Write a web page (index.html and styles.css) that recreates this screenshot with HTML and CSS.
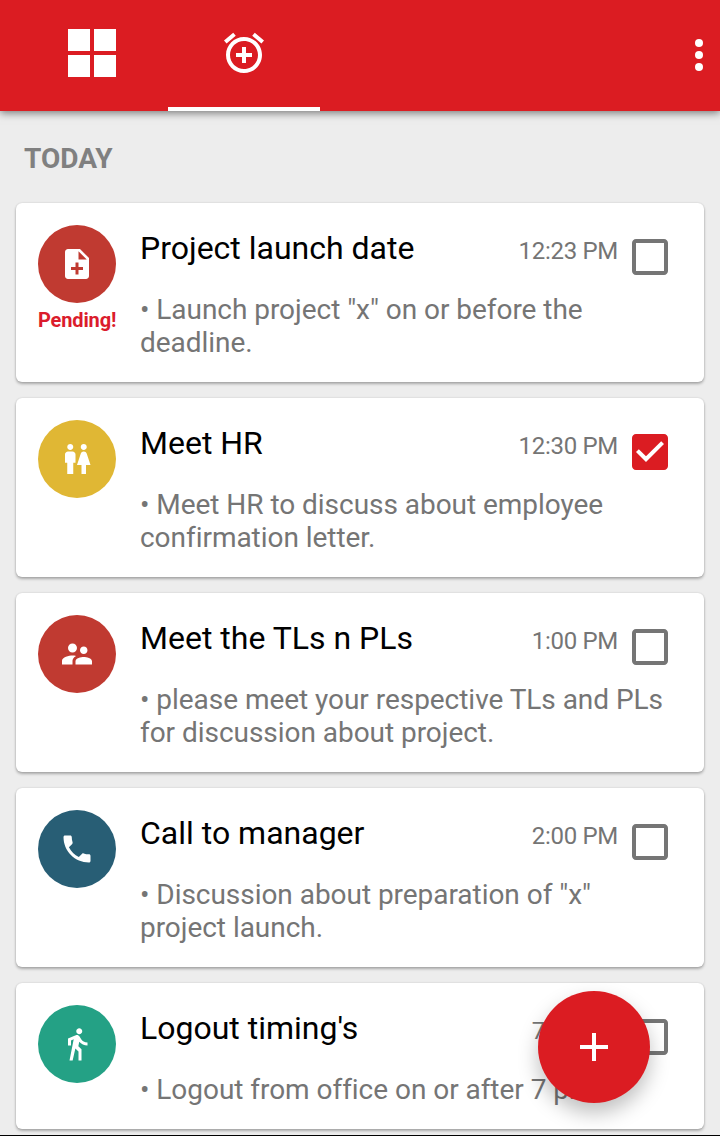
FILE: index.html
```
<!DOCTYPE html>
<html lang="en">
<head>
    <meta charset="UTF-8">
    <meta name="viewport" content="width=device-width, initial-scale=1.0">
    <title>Reminders</title>
    <link rel="stylesheet" href="styles.css">
</head>
<body>
    <header class="app-bar">
        <nav class="tabs">
            <a class="tab" aria-label="Dashboard">
                <svg viewBox="0 0 48 48"><path d="M0 0h22v22H0zM26 0h22v22H26zM0 26h22v22H0zM26 26h22v22H26z"/></svg>
            </a>
            <a class="tab active" aria-label="Reminders">
                <svg viewBox="0 0 24 24"><path d="M7.88 3.39L6.6 1.86 2 5.71l1.29 1.53 4.59-3.85zM22 5.72l-4.6-3.86-1.29 1.53 4.6 3.86L22 5.72zM12 4c-4.97 0-9 4.03-9 9s4.02 9 9 9c4.97 0 9-4.03 9-9s-4.03-9-9-9zm0 16c-3.87 0-7-3.13-7-7s3.13-7 7-7 7 3.13 7 7-3.13 7-7 7zm1-11h-2v3H8v2h3v3h2v-3h3v-2h-3V9z"/></svg>
            </a>
        </nav>
        <button class="more" aria-label="More options">
            <svg viewBox="0 0 8 32"><circle cx="4" cy="4" r="4"/><circle cx="4" cy="16" r="4"/><circle cx="4" cy="28" r="4"/></svg>
        </button>
    </header>

    <main>
        <h2 class="section-title">TODAY</h2>

        <div class="list">
            <div class="card">
                <div class="side">
                    <div class="avatar red">
                        <svg viewBox="0 0 24 24"><path d="M14 2H6c-1.1 0-1.99.9-1.99 2L4 20c0 1.1.89 2 1.99 2H18c1.1 0 2-.9 2-2V8l-6-6zm2 14h-3v3h-2v-3H8v-2h3v-3h2v3h3v2zm-3-7V3.5L18.5 9H13z"/></svg>
                    </div>
                    <span class="status">Pending!</span>
                </div>
                <div class="content">
                    <div class="row">
                        <h3 class="title">Project launch date</h3>
                        <span class="time">12:23 PM</span>
                        <svg class="checkbox" viewBox="3 3 18 18"><path d="M19 5v14H5V5h14m0-2H5c-1.1 0-2 .9-2 2v14c0 1.1.9 2 2 2h14c1.1 0 2-.9 2-2V5c0-1.1-.9-2-2-2z"/></svg>
                    </div>
                    <p class="text">• Launch project "x" on or before the<br>deadline.</p>
                </div>
            </div>

            <div class="card">
                <div class="side">
                    <div class="avatar yellow">
                        <svg viewBox="0 0 24 24"><path d="M5.5 22v-7.5H4V9c0-1.1.9-2 2-2h3c1.1 0 2 .9 2 2v5.5H9.5V22h-4zM18 22v-6h3l-2.54-7.63C18.18 7.55 17.42 7 16.56 7h-.12c-.86 0-1.63.55-1.9 1.37L12 16h3v6h3zM7.5 6c1.11 0 2-.89 2-2s-.89-2-2-2-2 .89-2 2 .89 2 2 2zm9 0c1.11 0 2-.89 2-2s-.89-2-2-2-2 .89-2 2 .89 2 2 2z"/></svg>
                    </div>
                </div>
                <div class="content">
                    <div class="row">
                        <h3 class="title">Meet HR</h3>
                        <span class="time">12:30 PM</span>
                        <svg class="checkbox checked" viewBox="3 3 18 18"><path d="M19 3H5c-1.11 0-2 .9-2 2v14c0 1.1.89 2 2 2h14c1.11 0 2-.9 2-2V5c0-1.1-.89-2-2-2zm-9 14l-5-5 1.41-1.41L10 14.17l7.59-7.59L19 8l-9 9z"/></svg>
                    </div>
                    <p class="text">• Meet HR to discuss about employee<br>confirmation letter.</p>
                </div>
            </div>

            <div class="card">
                <div class="side">
                    <div class="avatar red">
                        <svg viewBox="0 0 24 24"><path d="M16.5 12c1.38 0 2.49-1.12 2.49-2.5S17.88 7 16.5 7C15.12 7 14 8.12 14 9.5s1.12 2.5 2.5 2.5zM9 11c1.66 0 2.99-1.34 2.99-3S10.66 5 9 5C7.34 5 6 6.34 6 8s1.34 3 3 3zm7.5 3c-1.83 0-5.5.92-5.5 2.75V19h11v-2.25c0-1.83-3.67-2.75-5.5-2.75zM9 13c-2.33 0-7 1.17-7 3.5V19h7v-2.25c0-.85.33-2.34 2.37-3.47C10.5 13.1 9.66 13 9 13z"/></svg>
                    </div>
                </div>
                <div class="content">
                    <div class="row">
                        <h3 class="title">Meet the TLs n PLs</h3>
                        <span class="time">1:00 PM</span>
                        <svg class="checkbox" viewBox="3 3 18 18"><path d="M19 5v14H5V5h14m0-2H5c-1.1 0-2 .9-2 2v14c0 1.1.9 2 2 2h14c1.1 0 2-.9 2-2V5c0-1.1-.9-2-2-2z"/></svg>
                    </div>
                    <p class="text">• please meet your respective TLs and PLs<br>for discussion about project.</p>
                </div>
            </div>

            <div class="card">
                <div class="side">
                    <div class="avatar blue">
                        <svg viewBox="0 0 24 24"><path d="M6.62 10.79c1.44 2.83 3.76 5.14 6.59 6.59l2.2-2.2c.27-.27.67-.36 1.02-.24 1.12.37 2.33.57 3.57.57.55 0 1 .45 1 1V20c0 .55-.45 1-1 1-9.39 0-17-7.61-17-17 0-.55.45-1 1-1h3.5c.55 0 1 .45 1 1 0 1.25.2 2.45.57 3.57.11.35.03.74-.25 1.02l-2.2 2.2z"/></svg>
                    </div>
                </div>
                <div class="content">
                    <div class="row">
                        <h3 class="title">Call to manager</h3>
                        <span class="time">2:00 PM</span>
                        <svg class="checkbox" viewBox="3 3 18 18"><path d="M19 5v14H5V5h14m0-2H5c-1.1 0-2 .9-2 2v14c0 1.1.9 2 2 2h14c1.1 0 2-.9 2-2V5c0-1.1-.9-2-2-2z"/></svg>
                    </div>
                    <p class="text">• Discussion about preparation of "x"<br>project launch.</p>
                </div>
            </div>

            <div class="card">
                <div class="side">
                    <div class="avatar green">
                        <svg viewBox="0 0 24 24"><path d="M13.5 5.5c1.1 0 2-.9 2-2s-.9-2-2-2-2 .9-2 2 .9 2 2 2zM9.8 8.9L7 23h2.1l1.8-8 2.1 2v6h2v-7.5l-2.1-2 .6-3C14.8 12 16.8 13 19 13v-2c-1.9 0-3.5-1-4.3-2.4l-1-1.6c-.4-.6-1-1-1.7-1-.3 0-.5.1-.8.1L6 8.3V13h2V9.6l1.8-.7"/></svg>
                    </div>
                </div>
                <div class="content">
                    <div class="row">
                        <h3 class="title">Logout timing's</h3>
                        <span class="time">7:00 PM</span>
                        <svg class="checkbox" viewBox="3 3 18 18"><path d="M19 5v14H5V5h14m0-2H5c-1.1 0-2 .9-2 2v14c0 1.1.9 2 2 2h14c1.1 0 2-.9 2-2V5c0-1.1-.9-2-2-2z"/></svg>
                    </div>
                    <p class="text">• Logout from office on or after 7 pm</p>
                </div>
            </div>
        </div>
    </main>

    <button class="fab" aria-label="Add reminder">
        <svg viewBox="0 0 28 28"><path d="M12 0h4v12h12v4H16v12h-4V16H0v-4h12z"/></svg>
    </button>
</body>
</html>
```
FILE: styles.css
```
* {
    box-sizing: border-box;
    margin: 0;
    padding: 0;
}

body {
    height: 1136px;
    overflow: hidden;
    background-color: #ededed;
    border-bottom: 1px solid #000;
    font-family: Roboto, sans-serif;
    color: #757575;
}

svg {
    display: block;
    fill: #fff;
}

button {
    border: none;
    background: none;
    cursor: pointer;
}

/* Top bar */
.app-bar {
    display: flex;
    justify-content: space-between;
    height: 111px;
    padding: 0 17px 0 16px;
    background-color: #db1c22;
    box-shadow: 0 2px 8px rgba(0, 0, 0, 0.5);
}

.tabs {
    display: flex;
}

.tab {
    width: 152px;
    padding: 29px 52px 0;
    border-bottom: 4px solid transparent;
}

.tab.active {
    border-bottom-color: #fff;
}

.tab svg {
    width: 48px;
    height: 48px;
}

.more {
    padding-bottom: 1px;
}

.more svg {
    width: 8px;
    height: 32px;
}

.section-title {
    padding: 31px 24px 28px;
    font-size: 28px;
    line-height: 33px;
    font-weight: bold;
    color: #808080;
}

/* Reminder cards */
.list {
    display: flex;
    flex-direction: column;
    gap: 16px;
    padding: 0 16px;
}

.card {
    display: flex;
    gap: 24px;
    padding: 22px 22px 23px;
    border-radius: 6px;
    background-color: #fff;
    box-shadow: 0 2px 3px rgba(0, 0, 0, 0.28), 0 0 2px rgba(0, 0, 0, 0.15);
}

.side {
    width: 78px;
    text-align: center;
}

.avatar {
    display: flex;
    justify-content: center;
    align-items: center;
    height: 78px;
    border-radius: 50%;
}

.avatar svg {
    width: 36px;
    height: 36px;
}

.red {
    background-color: #c03a31;
}

.yellow {
    background-color: #e0b734;
}

.blue {
    background-color: #285e75;
}

.green {
    background-color: #24a185;
}

.status {
    display: block;
    margin-top: 5px;
    font-size: 20px;
    line-height: 24px;
    font-weight: bold;
    letter-spacing: -0.15px;
    color: #db1c2c;
    white-space: nowrap;
}

.content {
    flex: 1;
    padding-top: 4px;
}

.row {
    display: flex;
    align-items: baseline;
    height: 38px;
    padding-right: 14px;
}

.title {
    flex: 1;
    font-size: 32px;
    line-height: 38px;
    font-weight: normal;
    color: #000;
}

.time {
    font-size: 24px;
    line-height: 28px;
    letter-spacing: -0.3px;
}

.checkbox {
    align-self: flex-start;
    width: 36px;
    height: 36px;
    margin: 10px 0 0 14px;
    fill: #757575;
}

.checkbox.checked {
    fill: #db1c22;
}

.text {
    margin-top: 26px;
    font-size: 28px;
    line-height: 33px;
    letter-spacing: -0.04px;
    white-space: nowrap;
}

/* Floating add button */
.fab {
    position: fixed;
    right: 70px;
    bottom: 33px;
    display: flex;
    justify-content: center;
    align-items: center;
    width: 112px;
    height: 112px;
    border-radius: 50%;
    background-color: #db1c22;
    box-shadow: 0 10px 20px rgba(0, 0, 0, 0.25);
}

.fab svg {
    width: 28px;
    height: 28px;
}
```
